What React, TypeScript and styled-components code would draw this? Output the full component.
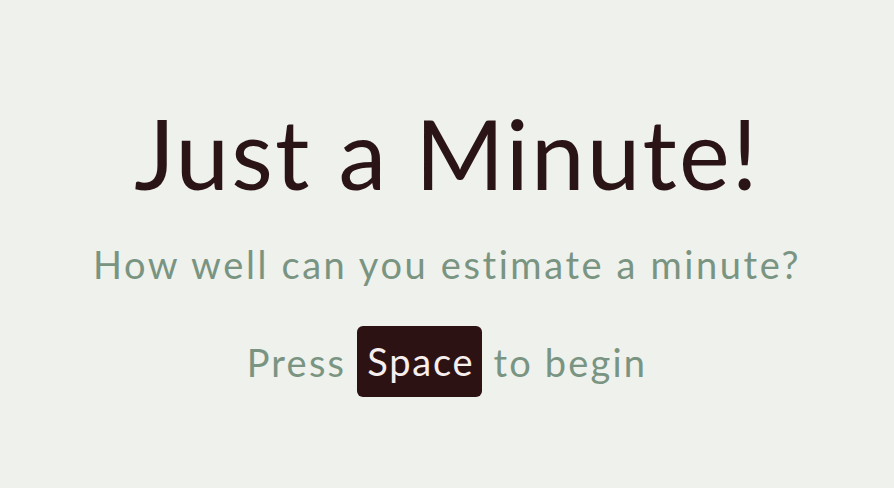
import styled, { createGlobalStyle } from "styled-components";

const GlobalStyle = createGlobalStyle`
	html, body {
		margin: 0;
		padding: 0;
		background: #eef1ec;
	}
	body {
		font-family: "Lato", "Noto Sans", sans-serif;
	}
`

const Screen = styled.main`
	height: 488px;
	display: flex;
	flex-direction: column;
	align-items: center;
	padding-top: 105px;
	box-sizing: border-box;
`

const Title = styled.h1`
	margin: 0;
	font-size: 96px;
	font-weight: 400;
	line-height: 1;
	color: #2a1416;
	letter-spacing: 2.2px;
`

const Subtitle = styled.p`
	margin: 44px 0 0;
	font-size: 38px;
	line-height: 1;
	color: #7a9482;
	letter-spacing: 2.6px;
`

const Prompt = styled.p`
	margin: 43px 0 0;
	display: flex;
	align-items: center;
	gap: 11px;
	font-size: 38px;
	line-height: 1;
	color: #7a9482;
	letter-spacing: 2.2px;
`

const Key = styled.kbd`
	font-family: inherit;
	font-size: 38px;
	line-height: 1;
	background: #2d1214;
	color: #f7eeee;
	border-radius: 6px;
	letter-spacing: 1.8px;
	padding: 16px 8px 17px 10px;
`

export default function App() {
	return <>
		<GlobalStyle />
		<Screen>
			<Title>Just a Minute!</Title>
			<Subtitle>How well can you estimate a minute?</Subtitle>
			<Prompt>
				<span>Press</span>
				<Key>Space</Key>
				<span>to begin</span>
			</Prompt>
		</Screen>
	</>
}
